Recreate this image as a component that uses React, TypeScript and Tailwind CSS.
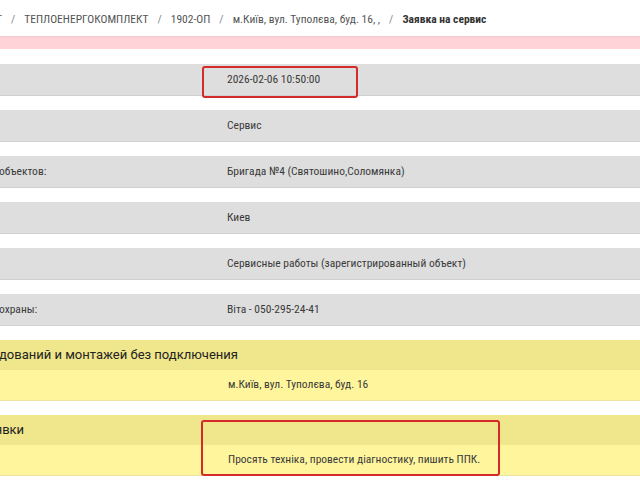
const crumbs = ["ТЕПЛОЕНЕРГОКОМПЛЕКТ", "1902-ОП", "м.Київ, вул. Туполєва, буд. 16, ,"];

const grayRows = [
  { label: "", value: "2026-02-06 10:50:00" },
  { label: "", value: "Сервис" },
  { label: "объектов:", value: "Бригада №4 (Святошино,Соломянка)" },
  { label: "", value: "Киев" },
  { label: "", value: "Сервисные работы (зарегистрированный объект)" },
  { label: "охраны:", value: "Віта - 050-295-24-41" },
];

function Row({ label, value }: { label: string; value: string }) {
  return (
    <div className="flex h-[32px] items-center bg-[#dedede] border-b border-[#d0d0d0]">
      <div className="w-[228px] shrink-0 -ml-[1px]">{label}</div>
      <div>{value}</div>
    </div>
  );
}

function Section({ title, value, titleShift }: { title: string; value: string; titleShift: string }) {
  return (
    <div className="flex flex-col">
      <div className="flex h-[30px] items-center bg-[#f0e68c] font-['Roboto',sans-serif] text-[13px] text-[#222]">
        <span className={titleShift}>{title}</span>
      </div>
      <div className="flex h-[31px] items-center bg-[#fff59d] border-b border-[#ece3a0]">
        <div className="w-[228px] shrink-0" />
        <div>{value}</div>
      </div>
    </div>
  );
}

export default function App() {
  return (
    <div className="relative w-[640px] h-[480px] overflow-hidden bg-white font-['Roboto_Condensed','Liberation_Sans_Narrow','DejaVu_Sans_Condensed',sans-serif] text-[11.5px] text-[#3a3a3a]">
      {/* sticky breadcrumb bar */}
      <header className="relative z-10 flex h-9 items-center gap-[9px] bg-white pt-1 text-[#555] shadow-[0_1px_2px_rgba(0,0,0,0.06)]">
        <span className="-ml-[4px]">Т</span>
        {crumbs.map((c) => (
          <div key={c} className="flex items-center gap-[9px]">
            <span className="text-[#888]">/</span>
            <span>{c}</span>
          </div>
        ))}
        <span className="text-[#888]">/</span>
        <span className="font-bold text-[#333]">Заявка на сервис</span>
      </header>

      <div className="h-[13px] overflow-hidden bg-[#ffd3d7]">
        <span className="block -mt-[11px] ml-[185px] leading-[14px] text-[#aaa]">200417</span>
      </div>

      <div className="flex flex-col gap-[14px] pt-[15px]">
        {grayRows.map((r, i) => (
          <Row key={i} label={r.label} value={r.value} />
        ))}
        <Section
          title="дований и монтажей без подключения"
          value="м.Київ, вул. Туполєва, буд. 16"
          titleShift="-ml-[1px]"
        />
        <Section
          title="явки"
          value="Просять техніка, провести діагностику, пишить ППК."
          titleShift="-ml-[5px]"
        />
      </div>

      {/* annotation frames */}
      <div className="absolute left-[202px] top-[66px] h-[32px] w-[156px] rounded-[3px] border-2 border-[#d42a2a]" />
      <div className="absolute left-[201px] top-[420px] h-[56px] w-[299px] rounded-[3px] border-2 border-[#d42a2a]" />
    </div>
  );
}
